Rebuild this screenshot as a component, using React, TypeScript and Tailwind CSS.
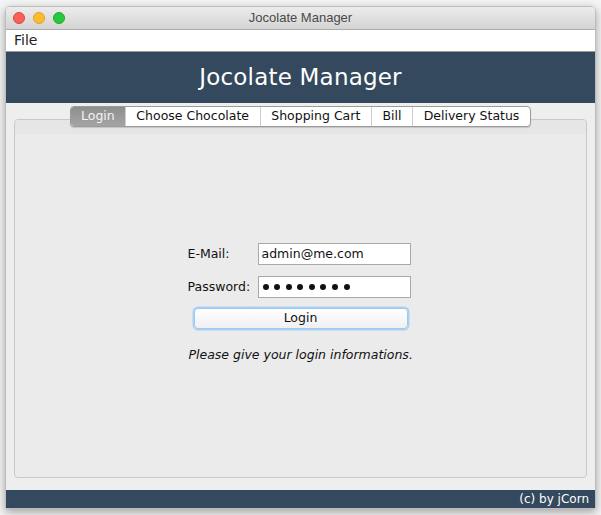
export default function App() {
    const tabs = ["Login", "Choose Chocolate", "Shopping Cart", "Bill", "Delivery Status"]
    const font = { fontFamily: '"DejaVu Sans", "Liberation Sans", sans-serif' }
    return (
        <div className="w-[601px] h-[515px] bg-[#f4f4f4] pt-[6px] pl-[5px]" style={font}>
            <div className="w-[591px] h-[503px] flex flex-col rounded-t-[5px] overflow-hidden shadow-[0_3px_10px_rgba(0,0,0,0.35)] border border-[#bdbdbd]">
                {/* title bar */}
                <div className="relative h-[23px] bg-gradient-to-b from-[#ececec] to-[#d4d4d4] border-b border-[#acacac] flex items-center justify-center">
                    <div className="absolute left-[7px] top-[5px] flex gap-[8px]">
                        <span className="w-[12px] h-[12px] rounded-full bg-[#fc5f57] border border-[#e0443e]" />
                        <span className="w-[12px] h-[12px] rounded-full bg-[#fdbc2e] border border-[#dea123]" />
                        <span className="w-[12px] h-[12px] rounded-full bg-[#28c840] border border-[#1aab29]" />
                    </div>
                    <span className="text-[13px] text-[#4a4a4a]" style={{ fontFamily: '"Liberation Sans", sans-serif' }}>Jocolate Manager</span>
                </div>
                {/* menu bar */}
                <div className="h-[22px] bg-white border-b border-[#9a9a9a] flex items-center pl-[8px]">
                    <span className="text-[14px] text-[#222]">File</span>
                </div>
                {/* header */}
                <div className="h-[51px] bg-[#34495e] flex items-center justify-center">
                    <span className="text-[23px] text-white tracking-[0.2px]">Jocolate Manager</span>
                </div>
                {/* content */}
                <div className="flex-1 bg-[#eeeeee] flex flex-col px-[8px] pt-[3px] pb-[12px]">
                    <div className="relative z-10 flex justify-center">
                        <div className="flex h-[21px] rounded-[4px] border border-[#9b9b9b] bg-white shadow-[0_1px_1px_rgba(0,0,0,0.15)] overflow-hidden text-[12.5px]">
                            {tabs.map((t, i) => (
                                <div key={t}
                                    className={i === 0
                                        ? "px-[10px] flex items-center bg-gradient-to-b from-[#8e8e8e] to-[#a4a4a4] text-[#f4f4f4]"
                                        : "px-[10.6px] flex items-center text-[#111] border-l border-[#cfcfcf]"}>
                                    {t}
                                </div>
                            ))}
                        </div>
                    </div>
                    <div className="flex-1 -mt-[8px] rounded-[4px] border border-[#c9c9c9] bg-[#ebebeb] flex flex-col">
                        <div className="h-[14px] bg-[#e6e6e6] rounded-t-[4px]" />
                        <div className="flex justify-center pt-[109px]">
                            <div className="w-[226px] flex flex-col text-[12.5px] text-[#111]">
                                <div className="flex items-center h-[22px]">
                                    <span className="w-[70px]">E-Mail:</span>
                                    <div className="w-[153px] h-[22px] bg-white border border-[#a9a9a9] flex items-center px-[3px]">admin@me.com</div>
                                </div>
                                <div className="flex items-center h-[22px] mt-[11px]">
                                    <span className="w-[70px]">Password:</span>
                                    <div className="w-[153px] h-[22px] bg-white border border-[#a9a9a9] flex items-center gap-[5.6px] pl-[4px]">
                                        {Array.from({ length: 8 }).map((_, i) => (
                                            <span key={i} className="w-[6px] h-[6px] rounded-full bg-[#111]" />
                                        ))}
                                    </div>
                                </div>
                                <div className="mt-[10px] mx-[6px] w-[214px] h-[21px] rounded-[4px] border border-[#9cc8f2] shadow-[0_0_0_1.5px_#a9d1f7] bg-gradient-to-b from-white to-[#f0f0f0] flex items-center justify-center">
                                    Login
                                </div>
                                <div className="mt-[17px] pl-[1px] italic">Please give your login informations.</div>
                            </div>
                        </div>
                    </div>
                </div>
                {/* footer */}
                <div className="h-[18px] bg-[#34495e] flex items-center justify-end pr-[6px]">
                    <span className="text-[12px] text-white">(c) by jCorn</span>
                </div>
            </div>
        </div>
    )
}
